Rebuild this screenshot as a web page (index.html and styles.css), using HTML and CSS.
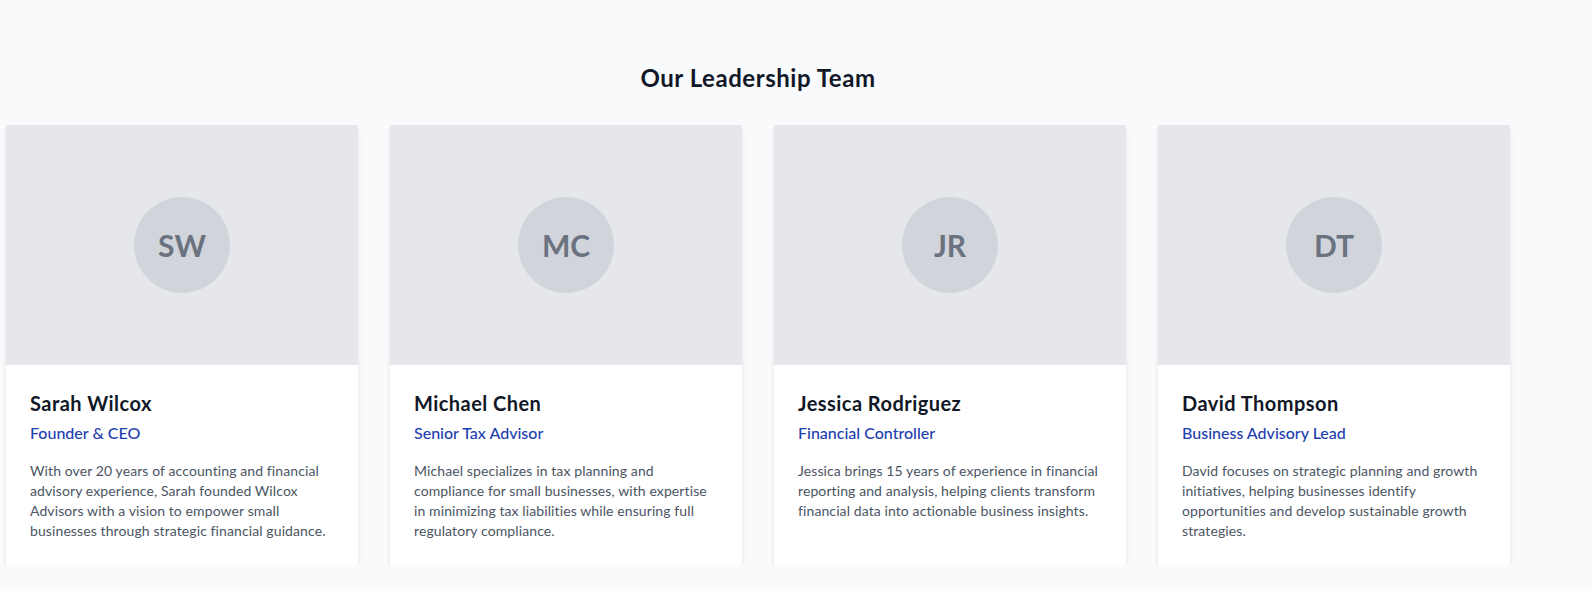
FILE: index.html
```html
<!DOCTYPE html>
<html lang="en">
<head>
<meta charset="utf-8">
<title>Our Leadership Team</title>
<link rel="stylesheet" href="styles.css">
</head>
<body>
<section class="team">
  <h2 class="team-title">Our Leadership Team</h2>
  <div class="team-grid">
    <article class="card">
      <div class="card-media"><div class="avatar">SW</div></div>
      <div class="card-body">
        <h3 class="card-name">Sarah Wilcox</h3>
        <p class="card-role">Founder &amp; CEO</p>
        <p class="card-bio">With over 20 years of accounting and financial advisory experience, Sarah founded Wilcox Advisors with a vision to empower small businesses through strategic financial guidance.</p>
      </div>
    </article>
    <article class="card">
      <div class="card-media"><div class="avatar">MC</div></div>
      <div class="card-body">
        <h3 class="card-name">Michael Chen</h3>
        <p class="card-role">Senior Tax Advisor</p>
        <p class="card-bio">Michael specializes in tax planning and compliance for small businesses, with expertise in minimizing tax liabilities while ensuring full regulatory compliance.</p>
      </div>
    </article>
    <article class="card">
      <div class="card-media"><div class="avatar">JR</div></div>
      <div class="card-body">
        <h3 class="card-name">Jessica Rodriguez</h3>
        <p class="card-role">Financial Controller</p>
        <p class="card-bio">Jessica brings 15 years of experience in financial reporting and analysis, helping clients transform financial data into actionable business insights.</p>
      </div>
    </article>
    <article class="card">
      <div class="card-media"><div class="avatar">DT</div></div>
      <div class="card-body">
        <h3 class="card-name">David Thompson</h3>
        <p class="card-role">Business Advisory Lead</p>
        <p class="card-bio">David focuses on strategic planning and growth initiatives, helping businesses identify opportunities and develop sustainable growth strategies.</p>
      </div>
    </article>
  </div>
</section>
</body>
</html>
```
FILE: styles.css
```css
* { box-sizing: border-box; }
html, body { margin: 0; padding: 0; }
body {
  background: #f9fafb;
  font-family: "Lato", "Noto Sans", sans-serif;
  color: #111827;
}
.team {
  width: 1504px;
  margin-left: 6px;
  padding-top: 62px;
}
.team-title {
  margin: 0 0 31px;
  font-size: 24px;
  line-height: 32px;
  font-weight: 700;
  letter-spacing: 0.55px;
  text-align: center;
  color: #111827;
}
.team-grid {
  display: grid;
  grid-template-columns: repeat(4, 352px);
  column-gap: 32px;
}
.card {
  background: #ffffff;
  box-shadow: 0 4px 6px -1px rgba(0,0,0,0.1), 0 2px 4px -2px rgba(0,0,0,0.1);
}
.card-media {
  height: 240px;
  background: #e5e7eb;
  display: flex;
  align-items: center;
  justify-content: center;
}
.avatar {
  width: 96px;
  height: 96px;
  border-radius: 50%;
  background: #d1d5db;
  color: #6b7280;
  font-size: 30px;
  font-weight: 700;
  display: flex;
  align-items: center;
  justify-content: center;
}
.card-body { padding: 24px; }
.card-name {
  margin: 0 0 4px;
  font-size: 20px;
  line-height: 28px;
  font-weight: 700;
  letter-spacing: 0.45px;
  color: #111827;
}
.card-role {
  margin: 0 0 16px;
  font-size: 16px;
  line-height: 24px;
  font-weight: 500;
  color: #1e40af;
}
.card-bio {
  margin: 0;
  font-size: 14px;
  line-height: 20px;
  letter-spacing: 0.1px;
  color: #4b5563;
}
```
